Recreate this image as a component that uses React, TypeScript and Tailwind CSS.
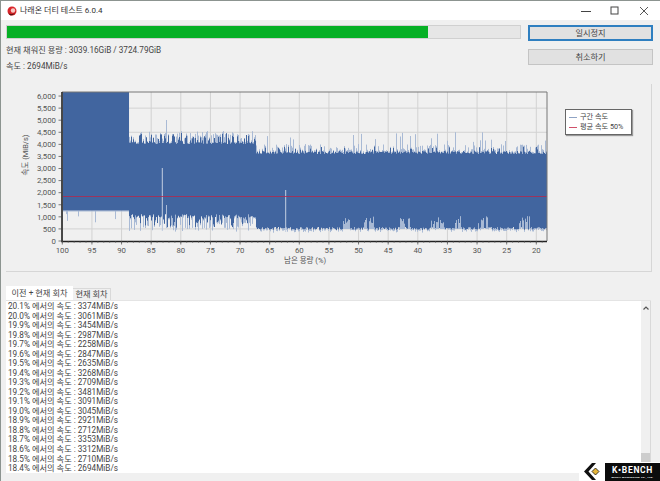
const rows: [string, number][] = [
  ['20.1', 3374], ['20.0', 3061], ['19.9', 3454], ['19.8', 2987], ['19.7', 2258], ['19.6', 2847],
  ['19.5', 2635], ['19.4', 3268], ['19.3', 2709], ['19.2', 3481], ['19.1', 3091], ['19.0', 3045],
  ['18.9', 2921], ['18.8', 2712], ['18.7', 3353], ['18.6', 3312], ['18.5', 2710], ['18.4', 2694],
];

// fixed seed so the noise in the chart is the same on every load
let seed = 12345;
const rnd = () => {
  seed = (seed * 16807) % 2147483647;
  return seed / 2147483647;
};

const buildChart = () => {
  let dark = '';
  let light = '';
  const clusters = [
    [343, 350], [363, 374], [400, 410], [431, 444], [455, 461], [474, 488], [519, 530],
  ];
  for (let x = 63.5; x < 547; x += 1) {
    let top = 92;
    let bottom = 210;
    let lightTop = 92;
    let lightBottom = 210;
    if (x < 129) {
      bottom = 210.5;
      lightBottom = rnd() < 0.08 ? 214 + rnd() * 9 : 211.5;
    } else if (x < 256) {
      top = 142 + rnd() * 2;
      if (rnd() < 0.4) top = 133 + rnd() * 9;
      lightTop = rnd() < 0.45 ? 131 + rnd() * 8 : top - rnd() * 2;
      bottom = 214 + rnd() * 4;
      if (rnd() < 0.35) bottom = 218 + rnd() * 10;
      lightBottom = rnd() < 0.45 ? 222 + rnd() * 10 : bottom + rnd() * 2;
      if (lightBottom < bottom) lightBottom = bottom;
    } else {
      top = 151 + rnd() * 3;
      if (rnd() < 0.15) top = 146 + rnd() * 5;
      lightTop = rnd() < 0.06 ? 132 + rnd() * 10 : rnd() < 0.35 ? 144 + rnd() * 6 : top - rnd() * 2;
      bottom = 227 + rnd() * 3;
      lightBottom = bottom + rnd() * 3;
      if (clusters.some(([a, b]) => x > a && x < b) && rnd() < 0.7) {
        bottom = 216 + rnd() * 8;
        lightBottom = 229;
      }
    }
    light += `M${x} ${lightTop.toFixed(1)}V${top.toFixed(1)}M${x} ${bottom.toFixed(1)}V${lightBottom.toFixed(1)}`;
    dark += `M${x} ${top.toFixed(1)}V${bottom.toFixed(1)}`;
  }
  return { dark, light };
};

const chart = buildChart();
const yScale = [6000, 5500, 5000, 4500, 4000, 3500, 3000, 2500, 2000, 1500, 1000, 500, 0];
const xScale = [100, 95, 90, 85, 80, 75, 70, 65, 60, 55, 50, 45, 40, 35, 30, 25, 20];
const yPos = (v: number) => 241 - (v / 500) * 12.08;
const xPos = (v: number) => 62.3 + (100 - v) * 5.925;

function Chart() {
  return (
    <svg width="558" height="188" viewBox="6 84 558 188" className="shrink-0 text-[7.8px]" fill="#555">
      <rect x="62" y="92" width="485" height="149" fill="#f0f0f0" />
      {xScale.map(v => (
        <path key={v} d={`M${xPos(v)} 92V241`} stroke="#d2d2d2" strokeWidth="1" />
      ))}
      {[500, 1500, 2500, 3500, 4500, 5500].map(v => (
        <path key={v} d={`M62 ${yPos(v)}H547`} stroke="#d2d2d2" strokeWidth="1" />
      ))}
      <path d={chart.light} stroke="#a9bad5" strokeWidth="1" />
      <path d={chart.dark} stroke="#41659f" strokeWidth="1.05" />
      <path d="M162.3 168V231" stroke="#c3cfe2" strokeWidth="1" />
      <path d="M166.5 120V143M166.5 205V225" stroke="#a9bad5" strokeWidth="1" />
      <path d="M285.7 190V232" stroke="#c3cfe2" strokeWidth="1" />
      <path d="M63 196.5H547" stroke="#b3284c" strokeWidth="0.8" />
      <path d="M62 92H547V241" fill="none" stroke="#777" strokeWidth="1" />
      <path d="M62 92V241.5H547" fill="none" stroke="#222" strokeWidth="1.6" />
      {yScale.map(v => (
        <g key={v}>
          <path d={`M58.5 ${yPos(v)}H62`} stroke="#444" strokeWidth="0.7" />
          <text x="56" y={yPos(v) + 2.8} textAnchor="end">
            {v === 0 ? '0' : v.toLocaleString('en-US')}
          </text>
        </g>
      ))}
      {xScale.map(v => (
        <g key={v}>
          <path d={`M${xPos(v)} 241V244.5`} stroke="#444" strokeWidth="0.7" />
          <text x={xPos(v)} y="253" textAnchor="middle">{v}</text>
        </g>
      ))}
      {Array.from({ length: 82 }, (_, i) => (
        <path key={i} d={`M${xPos(100 - i)} 241V243`} stroke="#555" strokeWidth="0.5" />
      ))}
      <text x="305" y="263" textAnchor="middle" className="text-[7.5px]">남은 용량 (%)</text>
      <text transform="translate(28 155) rotate(-90)" textAnchor="middle" className="text-[7.5px]">속도 (MiB/s)</text>
    </svg>
  );
}

function Logo() {
  return (
    <div className="absolute right-0 bottom-0 flex items-end bg-white pl-[3px]">
      <svg width="22" height="19" viewBox="0 0 22 19" className="mr-[1px]">
        <path d="M10 1L2 9.5L10 18H14L6.5 9.5L14 1Z" fill="#111" />
        <path d="M13.5 6L17 9.5L13.5 13L10 9.5Z" fill="#e5b53a" stroke="#111" strokeWidth="0.8" />
      </svg>
      <div className="flex h-[18px] w-[55px] flex-col items-center justify-center gap-[1px] bg-[#0c0c0c] text-white">
        <div className="text-[8.5px] leading-[9px] font-bold tracking-[0.7px]">K•BENCH</div>
        <div className="text-[2.5px] leading-[3px] font-bold tracking-[0.3px]">BENCH MARKBOARD CO., LTD.</div>
      </div>
    </div>
  );
}

export default function App() {
  return (
    <div className="relative flex h-[481px] w-[660px] flex-col overflow-hidden border-t border-l border-[#8c9490] bg-[#f0f0f0] font-['Roboto','Noto_Sans_CJK_KR',sans-serif] text-[#444]">
      <div className="flex h-[19px] shrink-0 items-center bg-white pl-[6px]">
        <svg width="10" height="10" viewBox="0 0 10 10">
          <circle cx="5" cy="5" r="4.5" fill="#d9252a" />
          <circle cx="6" cy="4.5" r="2.2" fill="#f6c9c4" />
          <path d="M1 6.5Q4 9.5 8.5 6.5Q6 10 3 9.3Z" fill="#5c1010" />
        </svg>
        <span className="ml-[3px] text-[8px] leading-none text-[#333]">나래온 더티 테스트 6.0.4</span>
        <div className="ml-auto flex items-center gap-[19px] pr-[11px] text-[#444]">
          <svg width="10" height="10" viewBox="0 0 10 10"><path d="M0 5.5H10" stroke="currentColor" /></svg>
          <svg width="10" height="10" viewBox="0 0 10 10"><rect x="1" y="1" width="7" height="7" fill="none" stroke="currentColor" /></svg>
          <svg width="10" height="10" viewBox="0 0 10 10"><path d="M1 1L9 9M9 1L1 9" stroke="currentColor" strokeWidth="0.9" /></svg>
        </div>
      </div>

      <div className="flex h-[64px] shrink-0 pt-[5px] pr-[7px] pl-[5px]">
        <div className="w-[515px]">
          <div className="h-[14px] border border-[#d0d0d0] bg-[#e6e6e6]">
            <div className="h-full w-[421px] bg-[#06b025]" />
          </div>
          <div className="mt-[6px] text-[8.2px] leading-[10px]">현재 채워진 용량 : 3039.16GiB / 3724.79GiB</div>
          <div className="mt-[6px] text-[8.2px] leading-[10px]">속도 : 2694MiB/s</div>
        </div>
        <div className="ml-[7px] flex flex-1 flex-col gap-[8px]">
          <button className="h-[16px] border-2 border-[#2f7fc0] bg-[#e1e1e1] text-[8.2px] leading-none">일시정지</button>
          <button className="h-[16px] border border-[#c4c4c4] bg-[#e1e1e1] text-[8.2px] leading-none">취소하기</button>
        </div>
      </div>

      <div className="mr-[8px] ml-[5px] flex h-[188px] shrink-0 border-r border-b border-[#d6d6d6]">
        <Chart />
        <div className="mt-[25px] ml-[1px] h-[26px] w-[67px] shrink-0 border-[1.5px] border-[#666] bg-white pl-[3px] text-[7.2px] leading-[10px] shadow-[1px_1px_1px_#999]">
          <div className="flex items-center gap-[3px] pt-[2px]">
            <span className="h-[1px] w-[8px] shrink-0 bg-[#8fa3c4]" />
            <span>구간 속도</span>
          </div>
          <div className="flex items-center gap-[3px]">
            <span className="h-[1px] w-[8px] shrink-0 bg-[#d0506a]" />
            <span>평균 속도 50%</span>
          </div>
        </div>
      </div>

      <div className="mt-[14px] flex h-[14px] shrink-0 items-end pl-[5px] text-[8.2px] leading-none">
        <div className="flex h-[14px] w-[67px] items-center justify-center bg-white">이전 + 현재 회차</div>
        <div className="flex h-[12px] w-[38px] items-center justify-center border-t border-r border-[#d9d9d9] bg-[#f0f0f0]">현재 회차</div>
      </div>

      <div className="mr-[9px] ml-[5px] flex h-[173px] shrink-0 border-t border-[#e4e4e4]">
        <div className="flex-1 overflow-hidden bg-white pt-[1px] pl-[2px] text-[8.2px] leading-[9.53px]">
          {rows.map(([pct, speed]) => (
            <div key={pct}>{pct}% 에서의 속도 : {speed}MiB/s</div>
          ))}
        </div>
        <div className="flex w-[10px] shrink-0 flex-col items-center justify-between border-r border-[#d9d9d9] bg-[#f0f0f0] pt-[5px]">
          <svg width="6" height="4" viewBox="0 0 6 4"><path d="M0.5 3.5L3 1L5.5 3.5" fill="none" stroke="#555" strokeWidth="1.2" /></svg>
          <div className="h-[20px] w-full bg-[#cdcdcd]" />
        </div>
      </div>

      <Logo />
    </div>
  );
}
